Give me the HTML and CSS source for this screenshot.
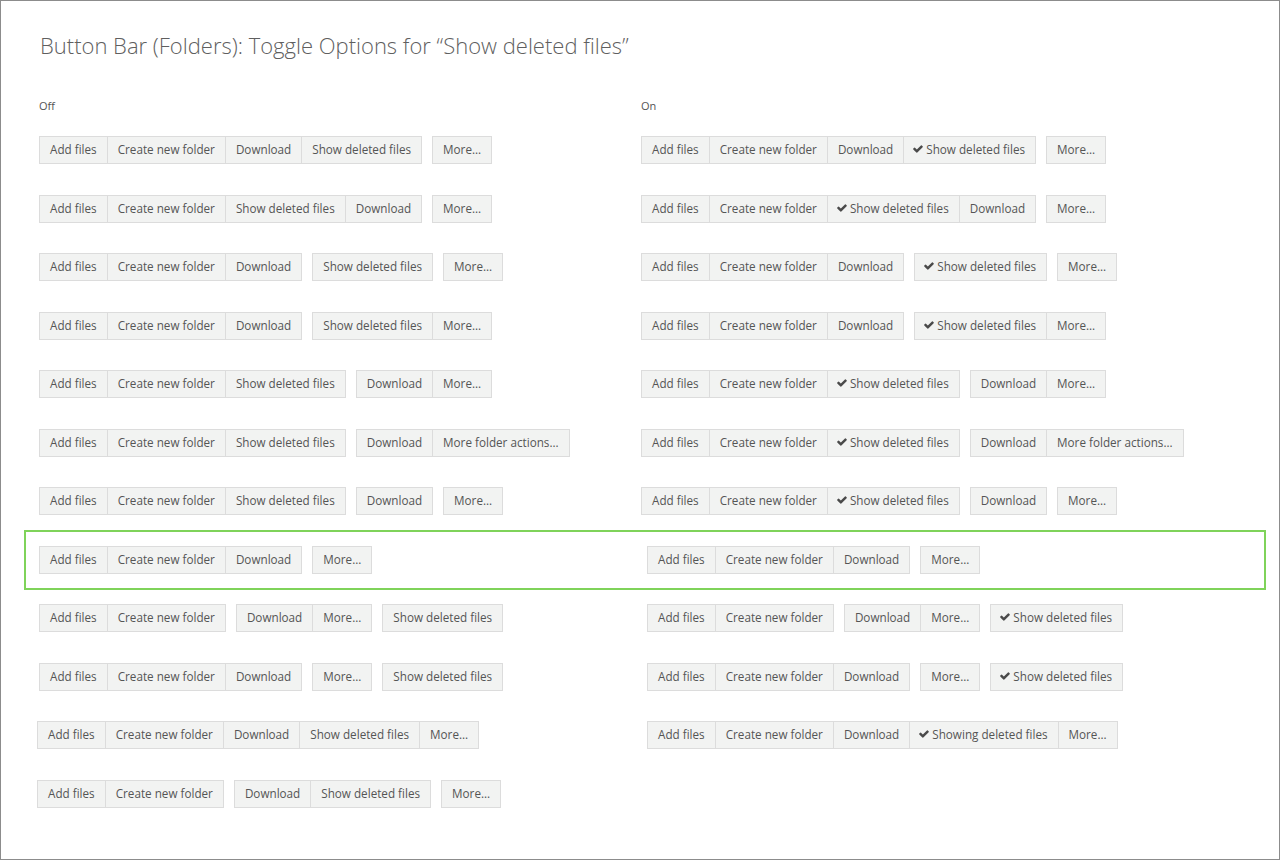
FILE: index.html
```html
<!DOCTYPE html>
<html lang="en">
<head>
<meta charset="utf-8">
<title>Button Bar (Folders): Toggle Options</title>
<link rel="stylesheet" href="styles.css">
</head>
<body>
<div class="frame">
  <h1 class="title">Button Bar (Folders): Toggle Options for “Show deleted files”</h1>
  <div class="heads"><span class="label">Off</span><span class="label">On</span></div>
  <div class="rows">

    <div class="row">
      <div class="cell">
        <div class="group"><span class="btn">Add files</span><span class="btn">Create new folder</span><span class="btn">Download</span><span class="btn">Show deleted files</span></div>
        <div class="group"><span class="btn">More...</span></div>
      </div>
      <div class="cell">
        <div class="group"><span class="btn">Add files</span><span class="btn">Create new folder</span><span class="btn">Download</span><span class="btn btn-on"><svg class="chk" viewBox="100 320 1600 1220"><path d="M1671 566q0 40-28 68l-724 724-136 136q-28 28-68 28t-68-28l-136-136-362-362q-28-28-28-68t28-68l136-136q28-28 68-28t68 28l294 295 656-657q28-28 68-28t68 28l136 136q28 28 28 68z"/></svg>Show deleted files</span></div>
        <div class="group"><span class="btn">More...</span></div>
      </div>
    </div>

    <div class="row">
      <div class="cell">
        <div class="group"><span class="btn">Add files</span><span class="btn">Create new folder</span><span class="btn">Show deleted files</span><span class="btn">Download</span></div>
        <div class="group"><span class="btn">More...</span></div>
      </div>
      <div class="cell">
        <div class="group"><span class="btn">Add files</span><span class="btn">Create new folder</span><span class="btn btn-on"><svg class="chk" viewBox="100 320 1600 1220"><path d="M1671 566q0 40-28 68l-724 724-136 136q-28 28-68 28t-68-28l-136-136-362-362q-28-28-28-68t28-68l136-136q28-28 68-28t68 28l294 295 656-657q28-28 68-28t68 28l136 136q28 28 28 68z"/></svg>Show deleted files</span><span class="btn">Download</span></div>
        <div class="group"><span class="btn">More...</span></div>
      </div>
    </div>

    <div class="row">
      <div class="cell">
        <div class="group"><span class="btn">Add files</span><span class="btn">Create new folder</span><span class="btn">Download</span></div>
        <div class="group"><span class="btn">Show deleted files</span></div>
        <div class="group"><span class="btn">More...</span></div>
      </div>
      <div class="cell">
        <div class="group"><span class="btn">Add files</span><span class="btn">Create new folder</span><span class="btn">Download</span></div>
        <div class="group"><span class="btn btn-on"><svg class="chk" viewBox="100 320 1600 1220"><path d="M1671 566q0 40-28 68l-724 724-136 136q-28 28-68 28t-68-28l-136-136-362-362q-28-28-28-68t28-68l136-136q28-28 68-28t68 28l294 295 656-657q28-28 68-28t68 28l136 136q28 28 28 68z"/></svg>Show deleted files</span></div>
        <div class="group"><span class="btn">More...</span></div>
      </div>
    </div>

    <div class="row">
      <div class="cell">
        <div class="group"><span class="btn">Add files</span><span class="btn">Create new folder</span><span class="btn">Download</span></div>
        <div class="group"><span class="btn">Show deleted files</span><span class="btn">More...</span></div>
      </div>
      <div class="cell">
        <div class="group"><span class="btn">Add files</span><span class="btn">Create new folder</span><span class="btn">Download</span></div>
        <div class="group"><span class="btn btn-on"><svg class="chk" viewBox="100 320 1600 1220"><path d="M1671 566q0 40-28 68l-724 724-136 136q-28 28-68 28t-68-28l-136-136-362-362q-28-28-28-68t28-68l136-136q28-28 68-28t68 28l294 295 656-657q28-28 68-28t68 28l136 136q28 28 28 68z"/></svg>Show deleted files</span><span class="btn">More...</span></div>
      </div>
    </div>

    <div class="row">
      <div class="cell">
        <div class="group"><span class="btn">Add files</span><span class="btn">Create new folder</span><span class="btn">Show deleted files</span></div>
        <div class="group"><span class="btn">Download</span><span class="btn">More...</span></div>
      </div>
      <div class="cell">
        <div class="group"><span class="btn">Add files</span><span class="btn">Create new folder</span><span class="btn btn-on"><svg class="chk" viewBox="100 320 1600 1220"><path d="M1671 566q0 40-28 68l-724 724-136 136q-28 28-68 28t-68-28l-136-136-362-362q-28-28-28-68t28-68l136-136q28-28 68-28t68 28l294 295 656-657q28-28 68-28t68 28l136 136q28 28 28 68z"/></svg>Show deleted files</span></div>
        <div class="group"><span class="btn">Download</span><span class="btn">More...</span></div>
      </div>
    </div>

    <div class="row">
      <div class="cell">
        <div class="group"><span class="btn">Add files</span><span class="btn">Create new folder</span><span class="btn">Show deleted files</span></div>
        <div class="group"><span class="btn">Download</span><span class="btn">More folder actions...</span></div>
      </div>
      <div class="cell">
        <div class="group"><span class="btn">Add files</span><span class="btn">Create new folder</span><span class="btn btn-on"><svg class="chk" viewBox="100 320 1600 1220"><path d="M1671 566q0 40-28 68l-724 724-136 136q-28 28-68 28t-68-28l-136-136-362-362q-28-28-28-68t28-68l136-136q28-28 68-28t68 28l294 295 656-657q28-28 68-28t68 28l136 136q28 28 28 68z"/></svg>Show deleted files</span></div>
        <div class="group"><span class="btn">Download</span><span class="btn">More folder actions...</span></div>
      </div>
    </div>

    <div class="row">
      <div class="cell">
        <div class="group"><span class="btn">Add files</span><span class="btn">Create new folder</span><span class="btn">Show deleted files</span></div>
        <div class="group"><span class="btn">Download</span></div>
        <div class="group"><span class="btn">More...</span></div>
      </div>
      <div class="cell">
        <div class="group"><span class="btn">Add files</span><span class="btn">Create new folder</span><span class="btn btn-on"><svg class="chk" viewBox="100 320 1600 1220"><path d="M1671 566q0 40-28 68l-724 724-136 136q-28 28-68 28t-68-28l-136-136-362-362q-28-28-28-68t28-68l136-136q28-28 68-28t68 28l294 295 656-657q28-28 68-28t68 28l136 136q28 28 28 68z"/></svg>Show deleted files</span></div>
        <div class="group"><span class="btn">Download</span></div>
        <div class="group"><span class="btn">More...</span></div>
      </div>
    </div>

    <div class="row row-selected">
      <div class="cell">
        <div class="group"><span class="btn">Add files</span><span class="btn">Create new folder</span><span class="btn">Download</span></div>
        <div class="group"><span class="btn">More...</span></div>
      </div>
      <div class="cell cell-shift">
        <div class="group"><span class="btn">Add files</span><span class="btn">Create new folder</span><span class="btn">Download</span></div>
        <div class="group"><span class="btn">More...</span></div>
      </div>
    </div>

    <div class="row">
      <div class="cell">
        <div class="group"><span class="btn">Add files</span><span class="btn">Create new folder</span></div>
        <div class="group"><span class="btn">Download</span><span class="btn">More...</span></div>
        <div class="group"><span class="btn">Show deleted files</span></div>
      </div>
      <div class="cell cell-shift">
        <div class="group"><span class="btn">Add files</span><span class="btn">Create new folder</span></div>
        <div class="group"><span class="btn">Download</span><span class="btn">More...</span></div>
        <div class="group"><span class="btn btn-on"><svg class="chk" viewBox="100 320 1600 1220"><path d="M1671 566q0 40-28 68l-724 724-136 136q-28 28-68 28t-68-28l-136-136-362-362q-28-28-28-68t28-68l136-136q28-28 68-28t68 28l294 295 656-657q28-28 68-28t68 28l136 136q28 28 28 68z"/></svg>Show deleted files</span></div>
      </div>
    </div>

    <div class="row">
      <div class="cell">
        <div class="group"><span class="btn">Add files</span><span class="btn">Create new folder</span><span class="btn">Download</span></div>
        <div class="group"><span class="btn">More...</span></div>
        <div class="group"><span class="btn">Show deleted files</span></div>
      </div>
      <div class="cell cell-shift">
        <div class="group"><span class="btn">Add files</span><span class="btn">Create new folder</span><span class="btn">Download</span></div>
        <div class="group"><span class="btn">More...</span></div>
        <div class="group"><span class="btn btn-on"><svg class="chk" viewBox="100 320 1600 1220"><path d="M1671 566q0 40-28 68l-724 724-136 136q-28 28-68 28t-68-28l-136-136-362-362q-28-28-28-68t28-68l136-136q28-28 68-28t68 28l294 295 656-657q28-28 68-28t68 28l136 136q28 28 28 68z"/></svg>Show deleted files</span></div>
      </div>
    </div>

    <div class="row">
      <div class="cell cell-back">
        <div class="group"><span class="btn">Add files</span><span class="btn">Create new folder</span><span class="btn">Download</span><span class="btn">Show deleted files</span><span class="btn">More...</span></div>
      </div>
      <div class="cell cell-shift">
        <div class="group"><span class="btn">Add files</span><span class="btn">Create new folder</span><span class="btn">Download</span><span class="btn btn-on"><svg class="chk" viewBox="100 320 1600 1220"><path d="M1671 566q0 40-28 68l-724 724-136 136q-28 28-68 28t-68-28l-136-136-362-362q-28-28-28-68t28-68l136-136q28-28 68-28t68 28l294 295 656-657q28-28 68-28t68 28l136 136q28 28 28 68z"/></svg>Showing deleted files</span><span class="btn">More...</span></div>
      </div>
    </div>

    <div class="row">
      <div class="cell cell-back">
        <div class="group"><span class="btn">Add files</span><span class="btn">Create new folder</span></div>
        <div class="group"><span class="btn">Download</span><span class="btn">Show deleted files</span></div>
        <div class="group"><span class="btn">More...</span></div>
      </div>
      <div class="cell"></div>
    </div>

  </div>
</div>
</body>
</html>
```

FILE: styles.css
```css
* {
  box-sizing: border-box;
}

html, body {
  margin: 0;
  padding: 0;
  background: #ffffff;
}

.frame {
  width: 1280px;
  height: 860px;
  border: 1px solid #8c8c8c;
  padding: 29px 0 0 38px;
  font-family: "Open Sans", "Liberation Sans", sans-serif;
  color: #555555;
  overflow: hidden;
}

.title {
  margin: 0;
  font-family: "Open Sans", "Liberation Sans", sans-serif;
  font-weight: 300;
  font-size: 22px;
  line-height: 30px;
  color: #5f5f5f;
  padding-left: 1px;
}

.heads {
  display: grid;
  grid-template-columns: 602px 1fr;
  margin-top: 39px;
}

.label {
  font-size: 11px;
  line-height: 14px;
  color: #555555;
}

.rows {
  margin-top: 23px;
  display: flex;
  flex-direction: column;
  gap: 30.5px;
}

.row {
  display: grid;
  grid-template-columns: 602px 1fr;
  height: 28px;
}

.row-selected {
  height: 60px;
  margin: -16px 13px -16px -15px;
  padding: 14px 0 14px 13px;
  border: 2px solid #7fd35a;
}

.cell {
  display: flex;
  align-items: flex-start;
  gap: 10px;
}

.cell-shift {
  margin-left: 6px;
}

.cell-back {
  margin-left: -2px;
}

.group {
  display: flex;
}

.btn {
  display: inline-flex;
  align-items: center;
  height: 28px;
  padding: 0 10px 2px;
  border: 1px solid #dcdcdc;
  background: #f2f3f2;
  font-size: 11.7px;
  color: #555555;
  white-space: nowrap;
}

.btn + .btn {
  margin-left: -1px;
}

.btn-on {
  padding-left: 9px;
}

.chk {
  width: 10px;
  height: 8px;
  margin-right: 3px;
  fill: #4a4a4a;
}
```
